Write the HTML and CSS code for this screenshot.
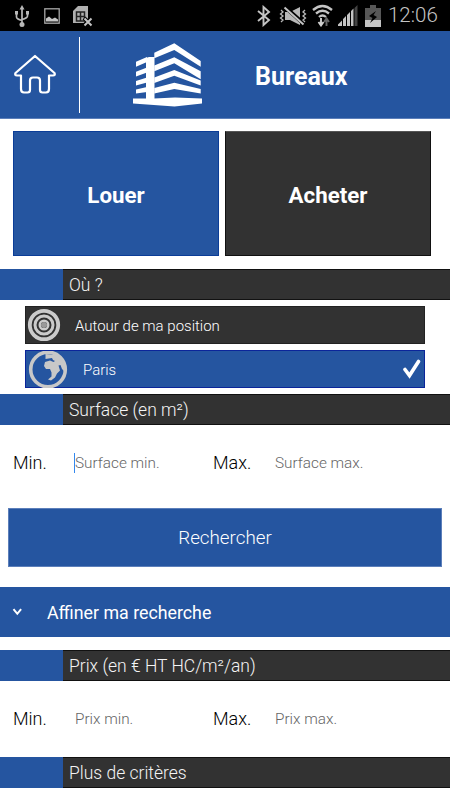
FILE: index.html
```html
<!DOCTYPE html>
<html lang="fr">

	<head>
		<meta charset="UTF-8">
		<title>Bureaux</title>
		<link rel="stylesheet" href="styles.css">
	</head>

	<body>
		<div class="status">
			<!-- usb -->
			<svg class="ic_usb" width="16" height="24" viewBox="0 0 16 24">
				<path d="M8 4v17M2.500 9v4q0 2 5.500 3.500M13.500 9v3q0 2 -5.500 3.500" fill="none" stroke="#b8b8b8" stroke-width="1.700"/>
				<path d="M8 1l2.500 4.500h-5zM1 7h3v3.500h-3zM12 7h3v3.500h-3z" fill="#b8b8b8"/>
				<circle cx="8" cy="20.500" r="2.500" fill="#b8b8b8"/>
			</svg>
			<!-- image -->
			<svg class="ic_image" width="16" height="16" viewBox="0 0 16 16">
				<rect x=".8" y=".8" width="14.400" height="14.400" fill="none" stroke="#a8a8a8" stroke-width="1.300"/>
				<path d="M2 13.500v-3l3-2 3 2.500 3-1.500 3 2v2z" fill="#c4c4c4"/>
			</svg>
			<!-- sim -->
			<svg class="ic_sim" width="20" height="22" viewBox="0 0 20 22">
				<path d="M5 1h10v17H0V6z" fill="#b0b0b0"/>
				<path d="M3.500 7h8v9h-8zM3.500 11.500h8M7.500 7v9" fill="none" stroke="#222" stroke-width="1.500"/>
				<path d="M11 13l7.500 7.500M18.500 13l-7.500 7.500" stroke="#000" stroke-width="4"/>
				<path d="M11.500 13.500l7 7M18.500 13.500l-7 7" stroke="#c4c4c4" stroke-width="2"/>
			</svg>
			<span class="space"></span>
			<!-- bluetooth -->
			<svg class="ic_bt" width="14" height="22" viewBox="0 0 14 22">
				<path d="M1 6l11 9-5.500 5V2l5.500 5-11 9" fill="none" stroke="#c4c4c4" stroke-width="1.900"/>
			</svg>
			<!-- muted -->
			<svg class="ic_mute" width="29" height="20" viewBox="0 0 29 20">
				<path d="M6 6h5l10-5v18l-10-5H6z" fill="#b8b8b8"/>
				<path d="M6 1l19 17" stroke="#000" stroke-width="4"/>
				<path d="M5.500 1.500l19 17" stroke="#c4c4c4" stroke-width="2"/>
				<path d="M2 4l2 2-2.500 2L4 10l-2.500 2L4 14l-2 2M26 4l-2 2 2.500 2-2.500 2 2.500 2-2.500 2 2 2" fill="none" stroke="#b8b8b8" stroke-width="1.300"/>
			</svg>
			<!-- wifi -->
			<svg class="ic_wifi" width="21" height="23" viewBox="0 0 21 23">
				<path d="M1 6q9.500-8 19 0M4 9.500q6.500-5.500 13 0M7 13q3.500-3 7 0" fill="none" stroke="#c4c4c4" stroke-width="2.300"/>
				<path d="M9 14v7M6.500 18l2.500 3.500 2.500-3.500" fill="none" stroke="#d0d0d0" stroke-width="1.900"/>
				<path d="M14.500 22v-7M12 18l2.500-3.500 2.500 3.500" fill="none" stroke="#666" stroke-width="1.900"/>
			</svg>
			<!-- signal -->
			<svg class="ic_signal" width="20" height="21" viewBox="0 0 20 21">
				<path d="M0 21v-1.500l4-4V21zM5 21v-7l3-3v10zM9 21V10l3-3v14zM13 21V6l2.500-2.500V21z" fill="#c4c4c4"/>
				<path d="M16.500 21V3L19.500 0v21z" fill="#444"/>
			</svg>
			<!-- battery -->
			<svg class="ic_bat" width="16" height="22" viewBox="0 0 16 22">
				<path d="M5 0h6v3h5v12H0V3h5z" fill="#575757"/>
				<path d="M0 15h16v7H0z" fill="#c4c4c4"/>
				<path d="M11 6L4 11l3.500 2L5 18l7-6-3.500-2z" fill="#000"/>
			</svg>
			<span class="clock">12:06</span>
		</div>

		<div class="header">
			<svg class="home" width="42" height="41" viewBox="0 0 42 41">
				<path d="M21 2L1.500 19q-1 2.500 1.500 2.500h4V35q0 3.500 3 3.500h3.500q2.500 0 2.500-2.500V26.500q0-3 3-3h4q3 0 3 3V36q0 2.500 2.500 2.500H32q3 0 3-3.500V21.500h4q2.500 0 1.500-2.500z" fill="none" stroke="#fff" stroke-width="2.200" stroke-linejoin="round"/>
			</svg>
			<span class="line"></span>
			<svg class="building" width="70" height="64" viewBox="0 0 70 64">
				<g fill="#fff">
					<path d="M21.300 9.700L41.300.3 67.700 18v5.700L41.300 7 21.300 15.300z"/>
					<path d="M21.300 22.500L41.300 14.300l26.400 14v8L41.300 20.300l-20 8z"/>
					<path d="M21.300 34.500L41.300 27l26.400 10.500v5L41.300 32.700 21.300 40z"/>
					<path d="M21.300 45L41.300 39.700 67.700 46v4.500L41.300 46l-20 4.500z"/>
					<path d="M13 15l3-1h5.500v42H13z"/>
					<path d="M3 18.700L14 14v5L3 23.700z"/>
					<path d="M3 28.700L14 24.500v5L3 33.500z"/>
					<path d="M3 38l11-3.500v5L3 42.500z"/>
					<path d="M3 46.500l11-2.500v5L3 50.500z"/>
					<path d="M0 55.500h21l21-1 27 1v5l-27.500 3L0 60.500z"/>
				</g>
			</svg>
			<h1>Bureaux</h1>
		</div>

		<div class="tiles">
			<div class="tile blue">Louer</div>
			<div class="tile">Acheter</div>
		</div>

		<div class="section">Où ?</div>
		<div class="options">
			<div class="option">
				<svg class="target" width="34" height="34" viewBox="0 0 34 34">
					<g fill="none" stroke="#cbcbcb">
						<circle cx="17" cy="17" r="14.200" stroke-width="3.800"/>
						<circle cx="17" cy="17" r="9" stroke-width="3"/>
						<circle cx="17" cy="17" r="4.300" stroke-width="2.400"/>
					</g>
					<circle cx="17" cy="17" r="3" fill="#999"/>
				</svg>
				<span>Autour de ma position</span>
			</div>
			<div class="option blue">
				<svg class="globe" width="40" height="37" viewBox="0 0 40 37">
					<circle cx="20" cy="18.500" r="17.300" fill="none" stroke="#c8c8c8" stroke-width="3.600"/>
					<path d="M17.500 3L30 4l6 9v7l-2-2-1.500-4-2 .5 1.500 5-3 3-2 4-4 3-3-1 3.500-3v-4l-1.500-3.500h-4L16 15l1-4 5-1.500 3.500 1.500 1.500-1-2-1-1-2-6.500 1z" fill="#c8c8c8"/>
				</svg>
				<span>Paris</span>
				<svg class="check" width="18" height="20" viewBox="0 0 18 20">
					<path d="M2 10.500l4.500 6L15.500 2.500" fill="none" stroke="#fff" stroke-width="3.600" stroke-linecap="round"/>
				</svg>
			</div>
		</div>

		<div class="section">Surface (en m²)</div>
		<div class="fields surface">
			<label>Min.</label>
			<input class="active" type="text" placeholder="Surface min."/>
			<label>Max.</label>
			<input type="text" placeholder="Surface max."/>
		</div>

		<button class="search">Rechercher</button>

		<div class="refine">
			<svg width="11" height="8" viewBox="0 0 11 8">
				<path d="M1.500 1.200l3.800 4.600 3.800-4.600" fill="none" stroke="#fff" stroke-width="2"/>
			</svg>
			<span>Affiner ma recherche</span>
		</div>

		<div class="section">Prix (en € HT HC/m²/an)</div>
		<div class="fields prix">
			<label>Min.</label>
			<input type="text" placeholder="Prix min."/>
			<label>Max.</label>
			<input type="text" placeholder="Prix max."/>
		</div>

		<div class="section">Plus de critères</div>
	</body>

</html>
```
FILE: styles.css
```css
*{
	box-sizing: border-box;
}
body{
	margin: 0;
	width: 450px;
	height: 800px;
	overflow: hidden;
	background: #fff;
	font-family: Roboto, "Liberation Sans", sans-serif;
}
svg{
	display: block;
	flex: none;
}

/* status bar */
.status{
	display: flex;
	align-items: center;
	height: 31px;
	padding: 0 12px 0 14px;
	background: #000;
}
.ic_image{ margin-left: 14px; }
.ic_sim{ margin-left: 13px; }
.space{ flex: 1; }
.ic_mute{ margin-left: 8px; }
.ic_wifi{ margin-left: 4px; }
.ic_signal{ margin-left: 5px; }
.ic_bat{ margin-left: 7px; }
.clock{
	width: 50px;
	margin-left: 7px;
	color: #c4c4c4;
	font-size: 20.5px;
	font-weight: 300;
	line-height: 33px;
	white-space: nowrap;
}

/* header */
.header{
	display: flex;
	align-items: center;
	height: 88px;
	padding-left: 14px;
	background: #2555a0;
	border-bottom: 1px solid #5c7fba;
}
.line{
	width: 1px;
	height: 76px;
	margin-left: 23px;
	background: #fff;
}
.building{ margin-left: 53px; }
h1{
	margin: 3px 0 0 52px;
	color: #fff;
	font-size: 25px;
	font-weight: 700;
}

/* louer / acheter */
.tiles{
	display: flex;
	gap: 6px;
	padding: 12px 19px 13px 13px;
}
.tile{
	flex: 1;
	height: 125px;
	color: #fff;
	background: #323232;
	border: 1px solid #111;
	border-top-color: #555;
	font-size: 22.3px;
	font-weight: 700;
	line-height: 126px;
	text-align: center;
}
.blue{
	background: #2555a0;
	border-color: #0b3d98;
}

.section{
	height: 31px;
	padding-left: 6px;
	border-left: 63px solid #2555a0;
	background: #323232;
	box-shadow: inset 0 1px #111, inset 0 -1px #111;
	color: #f4f4f4;
	font-size: 17.5px;
	font-weight: 300;
	line-height: 33px;
}

.options{
	display: flex;
	flex-direction: column;
	gap: 6px;
	padding: 6px 25px;
}
.option{
	display: flex;
	align-items: center;
	height: 38px;
	padding-left: 2px;
	background: #323232;
	border: 1px solid #222;
	color: #fff;
	font-size: 15px;
	font-weight: 300;
}
.option span{ padding-top: 1px; }
.option.blue{
	padding-left: 3px;
	background: #2555a0;
	border-color: #0b259a;
}
.option .target{ margin-left: -1px; }
.target + span{ margin-left: 14px; }
.globe{ margin-left: -1px; }
.globe + span{ margin-left: 15px; }
.check{ margin: 0 3px 0 auto; }

/* min / max */
.fields{
	display: grid;
	grid-template-columns: 62px 138px 62px 138px;
	align-items: center;
	padding-left: 13px;
}
.surface{ height: 75px; margin-bottom: 8px; }
.prix{ height: 76px; padding-bottom: 1px; }
.fields label{
	color: #000;
	font-size: 18px;
	font-weight: 300;
}
.fields input{
	width: 125px;
	height: 20px;
	padding: 0;
	border: 0;
	background: none;
	font-family: inherit;
	font-size: 15.3px;
	font-weight: 300;
}
.fields input::placeholder{
	color: #666;
}
.fields .active{
	box-shadow: -1px 0 #3388ee;
}

.search{
	display: block;
	width: 434px;
	height: 59px;
	margin: 0 8px 20px;
	padding: 0;
	background: #2555a0;
	border: 1px solid #5c7fba;
	color: #fff;
	font-family: inherit;
	font-size: 18.8px;
	font-weight: 300;
}

.refine{
	display: flex;
	align-items: center;
	height: 50px;
	margin-bottom: 13px;
	padding-left: 12px;
	background: #2555a0;
	color: #fff;
	font-size: 17.8px;
}
.refine span{ margin-left: 24px; }
```
